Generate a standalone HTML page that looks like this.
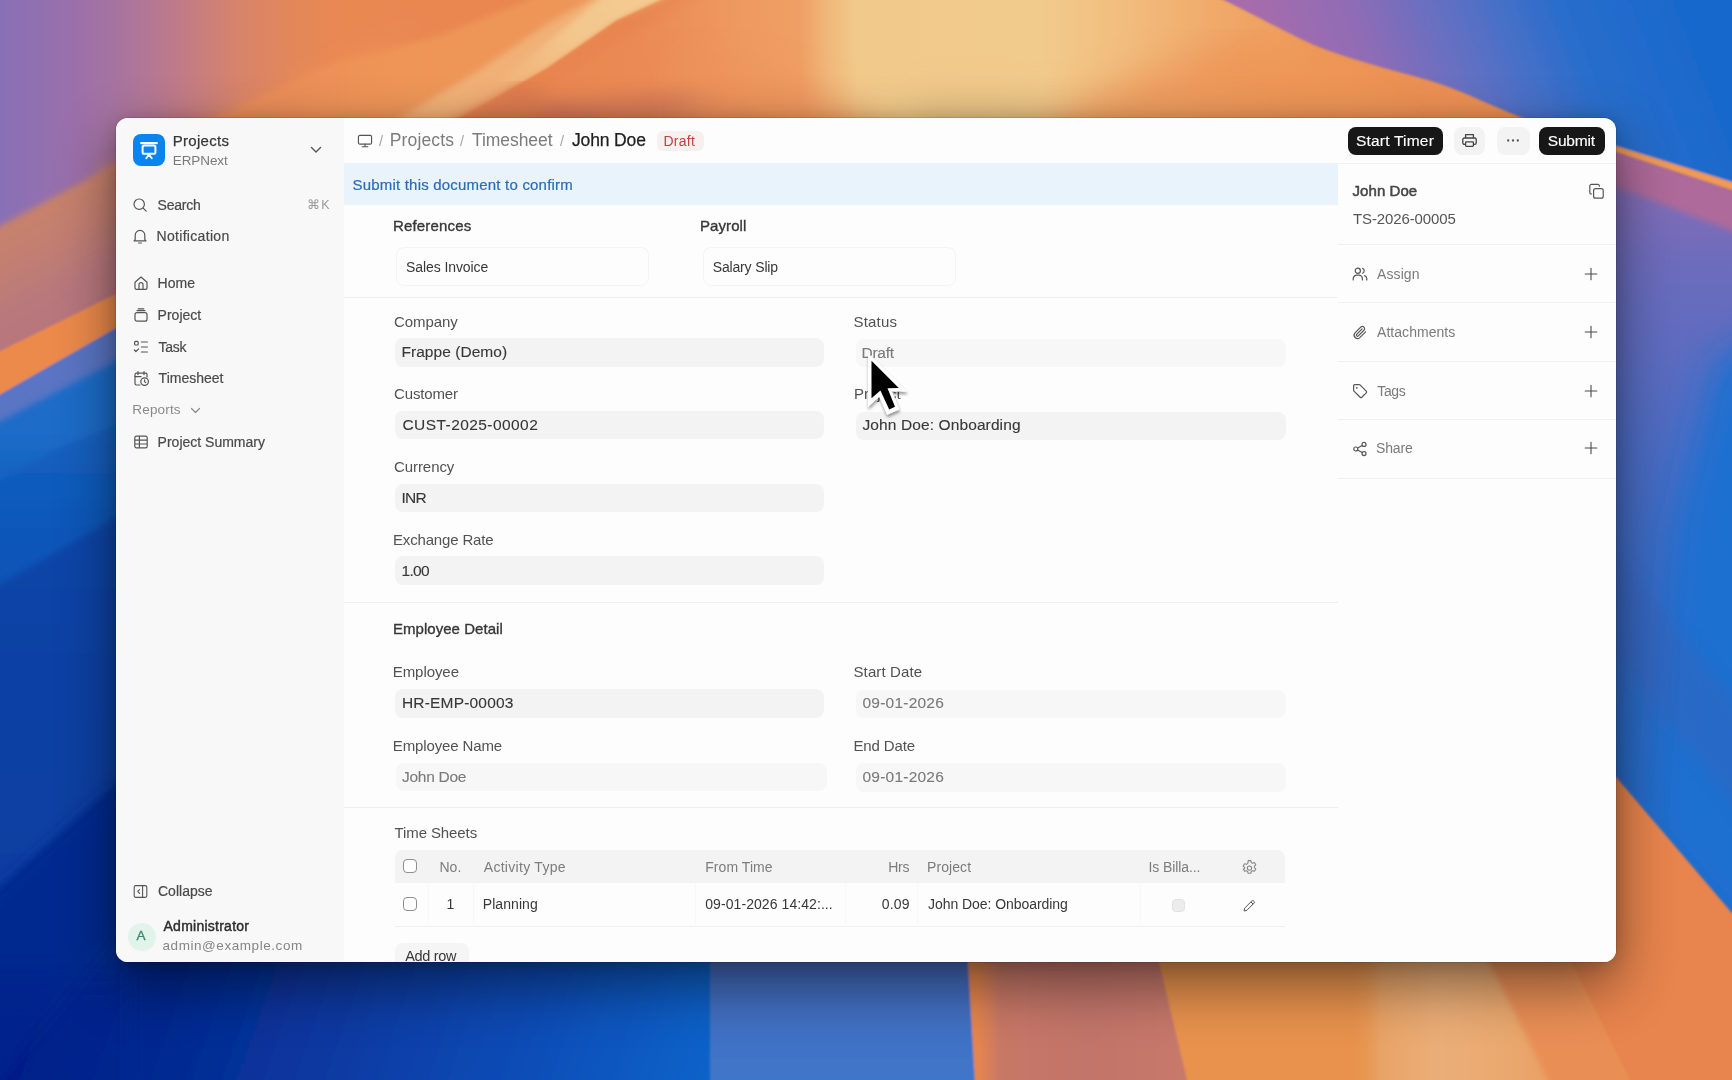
<!DOCTYPE html>
<html>
<head>
<meta charset="utf-8">
<title>John Doe - Timesheet</title>
<style>
*{box-sizing:border-box;margin:0;padding:0}
html,body{width:1732px;height:1080px;overflow:hidden;background:#0a3fa4}
body{font-family:"Liberation Sans",sans-serif;position:relative;color:#383838}
#bg{position:absolute;left:0;top:0;width:1732px;height:1080px}
#shadow{position:absolute;left:116px;top:118px;width:1500px;height:844px;border-radius:12px;box-shadow:0 22px 56px 2px rgba(0,0,0,.46),0 2px 20px rgba(0,0,0,.16),0 0 0 1px rgba(0,0,0,.10)}
#win{will-change:transform;position:absolute;left:116px;top:118px;width:1500px;height:844px;border-radius:12px;background:#fdfdfd;overflow:hidden}
.abs{position:absolute;white-space:nowrap}
/* SIDEBAR */
.m{-webkit-text-stroke:.25px currentColor}
.t14{font-size:15px;line-height:18px}
.sb{font-size:14px;line-height:18px;color:#4a4a4a;-webkit-text-stroke:.2px currentColor}
#side{position:absolute;left:0;top:0;width:228px;height:844px;background:#f8f8f8}
/* MAIN */
.bc{font-size:17.5px;line-height:22px}
.sec{font-size:15px;line-height:18px;color:#383838;-webkit-text-stroke:.35px currentColor}
.lb{font-size:15px;line-height:18px;color:#525252}
.val{font-size:15.5px;line-height:18px;color:#383838;-webkit-text-stroke:.12px currentColor}
.inp{background:#f3f3f3;border-radius:8px}
.inp.ro{background:#f7f7f7}
.box{border:1px solid #f4f4f4;border-radius:8px;background:#fdfdfd}
.th{font-size:14px;line-height:16px;color:#7c7c7c}
.td{font-size:14px;line-height:18px;color:#383838}
.cb{width:14px;height:14px;border:1.2px solid #8f8f8f;border-radius:4px;background:#fff}
.vs{top:765px;width:1px;height:44px;background:#f8f8f8}
.hl{left:0;width:278px;height:1px;background:#f0f0f0}
.rs{font-size:14px;line-height:18px;color:#7a7a7a}
.pl{left:245.500px}
#main{position:absolute;left:228px;top:0;width:994px;height:844px;background:#fdfdfd}
#rside{position:absolute;left:1222px;top:46px;width:278px;height:798px;background:#fdfdfd}
</style>
</head>
<body>
<svg id="bg" width="1732" height="1080" viewBox="0 0 1732 1080">
<defs>
<linearGradient id="gTop" x1="0" y1="0" x2="1732" y2="0" gradientUnits="userSpaceOnUse">
<stop offset="0" stop-color="#8870b6"/><stop offset="0.023" stop-color="#9270b0"/><stop offset="0.046" stop-color="#9c70a9"/><stop offset="0.069" stop-color="#a8749e"/><stop offset="0.092" stop-color="#b87890"/><stop offset="0.115" stop-color="#c87e7e"/><stop offset="0.139" stop-color="#d8846a"/><stop offset="0.173" stop-color="#e48858"/><stop offset="0.2" stop-color="#ea8852"/><stop offset="0.30" stop-color="#ea8650"/><stop offset="0.37" stop-color="#eb8a54"/><stop offset="0.43" stop-color="#ee9a60"/><stop offset="0.462" stop-color="#ef9f65"/><stop offset="0.478" stop-color="#f0b87a"/><stop offset="0.495" stop-color="#f1ca8b"/><stop offset="0.60" stop-color="#f1cb8c"/><stop offset="0.65" stop-color="#f1bd7e"/><stop offset="0.70" stop-color="#f0aa6a"/><stop offset="0.76" stop-color="#ee9858"/><stop offset="0.82" stop-color="#ec9054"/><stop offset="1" stop-color="#ea8a50"/>
</linearGradient>
<linearGradient id="gTopV" x1="0" y1="0" x2="0" y2="130" gradientUnits="userSpaceOnUse">
<stop offset="0" stop-color="#e8804c" stop-opacity="0"/><stop offset="0.55" stop-color="#e8804c" stop-opacity="0.05"/><stop offset="1" stop-color="#d87048" stop-opacity="0.55"/>
</linearGradient>
<linearGradient id="gSky" x1="1250" y1="0" x2="1640" y2="-150" gradientUnits="userSpaceOnUse">
<stop offset="0" stop-color="#a66cab"/><stop offset="0.22" stop-color="#8f6cb6"/><stop offset="0.45" stop-color="#5d70c4"/><stop offset="0.68" stop-color="#2a6ecb"/><stop offset="1" stop-color="#1668cc"/>
</linearGradient>
<linearGradient id="gLeft" x1="0" y1="0" x2="0" y2="1080" gradientUnits="userSpaceOnUse">
<stop offset="0" stop-color="#1e6eca"/><stop offset="0.40" stop-color="#1c6cc8"/><stop offset="0.50" stop-color="#0e56b8"/><stop offset="0.62" stop-color="#0840a2"/><stop offset="0.78" stop-color="#063296"/><stop offset="0.90" stop-color="#05248a"/><stop offset="1" stop-color="#041e86"/>
</linearGradient>
<linearGradient id="gBotL" x1="60" y1="900" x2="720" y2="1130" gradientUnits="userSpaceOnUse">
<stop offset="0" stop-color="#041e88"/><stop offset="0.2" stop-color="#05288f"/><stop offset="0.45" stop-color="#083aa2"/><stop offset="0.7" stop-color="#0a4cb6"/><stop offset="0.88" stop-color="#0a5cc4"/><stop offset="1" stop-color="#0b66cc"/>
</linearGradient>
<linearGradient id="gRight" x1="0" y1="170" x2="0" y2="900" gradientUnits="userSpaceOnUse">
<stop offset="0" stop-color="#8a6cb4"/><stop offset="0.12" stop-color="#6e6cbc"/><stop offset="0.40" stop-color="#4a6cc4"/><stop offset="0.70" stop-color="#2f69c4"/><stop offset="1" stop-color="#2568c6"/>
</linearGradient>
<linearGradient id="gRightH" x1="1616" y1="0" x2="1732" y2="0" gradientUnits="userSpaceOnUse">
<stop offset="0" stop-color="#1a70d0" stop-opacity="0"/><stop offset="0.45" stop-color="#1a70d0" stop-opacity="0.35"/><stop offset="1" stop-color="#1a70d0" stop-opacity="0.95"/>
</linearGradient>
<linearGradient id="gPeach" x1="1352" y1="0" x2="1550" y2="0" gradientUnits="userSpaceOnUse">
<stop offset="0" stop-color="#e8964f" stop-opacity="0"/><stop offset="0.15" stop-color="#e9a468"/><stop offset="0.45" stop-color="#ebae78"/><stop offset="0.8" stop-color="#eaa86e"/><stop offset="1" stop-color="#e9a064"/>
</linearGradient>
<linearGradient id="gRose" x1="968" y1="0" x2="1200" y2="0" gradientUnits="userSpaceOnUse">
<stop offset="0" stop-color="#e8884e"/><stop offset="0.05" stop-color="#e4844f"/><stop offset="0.14" stop-color="#c87866"/><stop offset="0.5" stop-color="#c2746a"/><stop offset="1" stop-color="#c87a6a"/>
</linearGradient>
<linearGradient id="gPeri" x1="0" y1="962" x2="0" y2="1080" gradientUnits="userSpaceOnUse">
<stop offset="0" stop-color="#446abc"/><stop offset="1" stop-color="#4076ca"/>
</linearGradient>
<linearGradient id="gB1" x1="0" y1="0" x2="420" y2="0" gradientUnits="userSpaceOnUse">
<stop offset="0" stop-color="#cc8270"/><stop offset="0.3" stop-color="#d2846a"/><stop offset="0.6" stop-color="#e88a5a"/><stop offset="0.85" stop-color="#ee9056" stop-opacity=".6"/><stop offset="1" stop-color="#ee9056" stop-opacity="0"/>
</linearGradient>
<filter id="b20" x="-30%" y="-10%" width="160%" height="120%"><feGaussianBlur stdDeviation="18"/></filter>
<linearGradient id="gEdge" x1="546" y1="69" x2="566" y2="97" gradientUnits="userSpaceOnUse"><stop offset="0" stop-color="#e8844e"/><stop offset="1" stop-color="#e8844e" stop-opacity="0"/></linearGradient>
<linearGradient id="gStreak" x1="661" y1="0" x2="470" y2="112" gradientUnits="userSpaceOnUse"><stop offset="0" stop-color="#f4cc92"/><stop offset="0.45" stop-color="#f3c68c"/><stop offset="1" stop-color="#f1b076" stop-opacity="0.2"/></linearGradient>
<linearGradient id="gB1v" x1="58" y1="195" x2="114" y2="300" gradientUnits="userSpaceOnUse"><stop offset="0" stop-color="#c8826a"/><stop offset="0.35" stop-color="#c27e72"/><stop offset="0.7" stop-color="#b8787c"/><stop offset="1" stop-color="#b6767e"/></linearGradient>
<filter id="b3" x="-5%" y="-5%" width="110%" height="110%"><feGaussianBlur stdDeviation="3"/></filter>
<filter id="b8" x="-5%" y="-5%" width="110%" height="110%"><feGaussianBlur stdDeviation="8"/></filter>
<filter id="b1" x="-5%" y="-5%" width="110%" height="110%"><feGaussianBlur stdDeviation="1.2"/></filter>
</defs>
<!-- base -->
<rect x="-20" y="-20" width="1772" height="1120" fill="url(#gLeft)"/>
<!-- top dune area -->
<rect x="-20" y="-20" width="1772" height="420" fill="url(#gTop)"/>
<!-- light ridge fan top-left -->
<g filter="url(#b3)">
<path d="M205,130 L217,120 L339,62 L442,35 L529,0 L545,-12 L680,-12 L661,0 L616,21 L546,69 L460,118 L440,130 Z" fill="#ee9658"/>
<path d="M380,130 L480,70 L546,25 L590,0 L610,-12 L680,-12 L661,0 L616,21 L546,69 L460,118 L440,130 Z" fill="#f1b076"/>
</g>
<g filter="url(#b3)">
<path d="M462,117 L546,69 L616,21 L661,0 L680,-12 L612,-12 L598,0 L572,22 L530,56 L490,88 Z" fill="url(#gStreak)"/>
</g>
<g filter="url(#b1)"><path d="M460,118 L546,69 L616,21 L661,0 L680,-12 L700,-12 L700,10 L640,30 L560,80 L480,130 L450,130 Z" fill="url(#gEdge)"/></g>
<g filter="url(#b8)">
<path d="M440,140 L460,118 L520,84 L600,118 L760,140 Z" fill="#d87850" opacity=".8"/>
<path d="M500,140 L560,100 L700,90 L820,140 Z" fill="#c87058" opacity=".55"/>
</g>
<g filter="url(#b20)">
<path d="M690,150 L690,60 Q800,70 905,150 Z" fill="#ec9258" opacity=".75"/>
<path d="M1010,150 Q1090,80 1250,40 L1420,150 Z" fill="#ec9256" opacity=".7"/>
<path d="M900,150 L920,100 L1040,100 L1060,150 Z" fill="#d8b078" opacity=".5"/>
</g>
<!-- left strip bands -->
<g filter="url(#b8)">
<path d="M100,172 L116,164 L240,106 L330,62 L420,20 L420,150 L100,190 Z" fill="url(#gB1)"/>
</g>
<g filter="url(#b3)">
<path d="M-30,242 L116,164 L140,151 L140,430 L-30,430 Z" fill="url(#gB1v)"/>
</g>
<g filter="url(#b1)">
<path d="M-20,361 L116,294 L140,282 L140,420 L-20,420 Z" fill="#ec8a4c"/>
<path d="M-20,406 L116,328 L140,314 L140,620 L-20,620 Z" fill="#5a74c4"/>
</g>
<g filter="url(#b3)">
<path d="M-20,432 L116,361 L140,348 L140,1100 L-20,1100 Z" fill="url(#gLeft)"/>
<path d="M-20,490 L55,450 L116,425 L140,412 L140,1100 L-20,1100 Z" fill="#0f58ba" opacity=".55"/>
<path d="M-20,596 L116,517 L140,503 L140,1100 L-20,1100 Z" fill="#083a9c" opacity=".6"/>
<path d="M-20,905 L116,784 L140,763 L140,1100 L-20,1100 Z" fill="#062a8e" opacity=".75"/>
</g>
<!-- bottom strip -->
<g filter="url(#b20)"><rect x="-60" y="975" width="780" height="200" fill="url(#gBotL)"/></g><g filter="url(#b8)"><rect x="130" y="940" width="600" height="180" fill="url(#gBotL)"/></g>
<g filter="url(#b8)"><path d="M-20,905 L116,784 L116,940 L-20,1100 Z" fill="#062a8e" opacity=".6"/></g>
<g filter="url(#b1)">
<rect x="710" y="900" width="270" height="200" fill="url(#gPeri)"/>
<path d="M964,900 L968,962 L976,1100 L1200,1100 L1200,900 Z" fill="url(#gRose)"/>
<path d="M1150,900 L1159,962 L1187,1080 L1192,1100 L1760,1100 L1760,900 Z" fill="#e8924e"/>
</g>
<g filter="url(#b3)">
<path d="M1352,930 L1485,930 L1489,962 L1548,1080 L1558,1100 L1352,1100 Z" fill="url(#gPeach)"/>
<path d="M1485,930 L1565,930 L1571,962 L1630,1080 L1640,1100 L1558,1100 L1548,1080 L1489,962 Z" fill="#e98e54"/>
</g>
<!-- right strip -->
<rect x="1560" y="140" width="200" height="800" fill="url(#gRight)"/>
<g filter="url(#b20)"><path d="M1716,360 L1790,325 L1790,990 L1650,830 L1674,530 Z" fill="#1a70d0"/></g>
<g filter="url(#b8)"><path d="M1590,520 L1770,745 L1770,850 L1590,625 Z" fill="#3a5eb6" opacity=".38"/></g>
<g filter="url(#b1)">
<path d="M1560,722 L1616,777 L1732,913 L1760,946 L1760,1100 L1640,1100 L1630,1080 L1571,962 L1560,930 Z" fill="#e8844d"/>
</g>
<g filter="url(#b3)"><path d="M1560,133 L1616,150 L1732,187 L1760,196 L1760,244 L1732,231 L1616,186 L1560,166 Z" fill="#ae6a9a"/></g>
<!-- sky top-right -->
<g filter="url(#b1)">
<path d="M1213,-5 C1250,12 1290,35 1319,47 S1400,72 1428,80 S1490,105 1520,117 L1616,147 L1732,184 L1760,193 L1760,-20 L1213,-20 Z" fill="url(#gSky)"/>
<path d="M1560,130 L1616,146 L1732,182 L1760,191 L1760,200 L1732,190 L1616,152 L1560,135 Z" fill="#f09a52"/>
</g>

</svg>
<div id="shadow"></div>
<div id="win">
<div id="side">
<!-- logo -->
<div class="abs" style="left:17px;top:16px;width:32px;height:32px;border-radius:8px;background:#0a85f0"></div>
<svg class="abs" style="left:17px;top:16px" width="32" height="32" viewBox="0 0 32 32" fill="none">
<path d="M8.2 9.2h15.6" stroke="#fff" stroke-width="2.2" stroke-linecap="round"/>
<rect x="9.6" y="11.6" width="12.8" height="8.2" rx="1.6" stroke="#fff" stroke-width="2"/>
<path d="M13.2 24.2l2.8-3.6 2.8 3.6" stroke="#fff" stroke-width="1.8" stroke-linecap="round" stroke-linejoin="round"/>
<path d="M16 19.8v2" stroke="#fff" stroke-width="1.8"/>
</svg>
<div class="abs t14 m" id="s_projects" style="left:56.75px;top:14.06px;color:#383838;letter-spacing:0.286px">Projects</div>
<div class="abs" id="s_erp" style="left:56.75px;top:34.83px;font-size:13.5px;line-height:16px;color:#7a7a7a;letter-spacing:-0.081px">ERPNext</div>
<svg class="abs" style="left:194px;top:28px" width="12" height="8" viewBox="0 0 12 8" fill="none"><path d="M1.5 1.5L6 6l4.5-4.5" stroke="#555" stroke-width="1.4" stroke-linecap="round" stroke-linejoin="round"/></svg>
<!-- search -->
<svg class="abs" style="left:16px;top:79px" width="16" height="16" viewBox="0 0 16 16" fill="none"><circle cx="7.2" cy="7.2" r="5.2" stroke="#555" stroke-width="1.2"/><path d="M11.2 11.2l3 3" stroke="#555" stroke-width="1.2" stroke-linecap="round"/></svg>
<div class="abs sb" id="s_search" style="left:41.50px;top:77.66px;letter-spacing:-0.200px">Search</div>
<div class="abs" id="s_k" style="left:191.25px;top:79.18px;font-size:12.5px;line-height:16px;color:#9a9a9a;letter-spacing:1.000px">&#8984;K</div>
<svg class="abs" style="left:16px;top:110px" width="16" height="17" viewBox="0 0 16 17" fill="none"><path d="M3.2 11.6V7.2a4.8 4.8 0 019.6 0v4.4l1.2 1.2H2l1.2-1.2z" stroke="#555" stroke-width="1.2" stroke-linejoin="round"/><path d="M6.6 15h2.8" stroke="#555" stroke-width="1.2" stroke-linecap="round"/></svg>
<div class="abs sb" id="s_notif" style="left:40.50px;top:109.41px;letter-spacing:0.316px">Notification</div>
<!-- nav -->
<svg class="abs" style="left:17px;top:157px" width="16" height="16" viewBox="0 0 16 16" fill="none"><path d="M2 7.2L8 2l6 5.2V13a1.4 1.4 0 01-1.4 1.4H3.4A1.4 1.4 0 012 13V7.2z" stroke="#555" stroke-width="1.2" stroke-linejoin="round"/><path d="M6 14.2V9.6a2 2 0 014 0v4.6" stroke="#555" stroke-width="1.2"/></svg>
<div class="abs sb" id="s_home" style="left:41.60px;top:156.36px;letter-spacing:-0.002px">Home</div>
<svg class="abs" style="left:17px;top:189px" width="16" height="16" viewBox="0 0 16 16" fill="none"><rect x="2" y="5.6" width="12" height="8.6" rx="2" stroke="#555" stroke-width="1.2"/><path d="M4 3.6h8M5.2 1.8h5.6" stroke="#555" stroke-width="1.2" stroke-linecap="round"/></svg>
<div class="abs sb" id="s_project" style="left:41.60px;top:188.05px;letter-spacing:0.002px">Project</div>
<svg class="abs" style="left:17px;top:221px" width="16" height="16" viewBox="0 0 16 16" fill="none"><rect x="1.6" y="2.4" width="3.6" height="3.6" rx="1" stroke="#555" stroke-width="1.2"/><path d="M1.4 11l1.5 1.5L5.6 9.8" stroke="#555" stroke-width="1.2" stroke-linecap="round" stroke-linejoin="round"/><path d="M8.4 3h6M8.4 8h6M8.4 13h6" stroke="#555" stroke-width="1.2" stroke-linecap="round"/></svg>
<div class="abs sb" id="s_task" style="left:42.60px;top:219.75px;letter-spacing:-0.333px">Task</div>
<svg class="abs" style="left:17px;top:252px" width="17" height="17" viewBox="0 0 17 17" fill="none"><path d="M7 15H3.4A1.4 1.4 0 012 13.6V4.6a1.4 1.4 0 011.4-1.4h9.2A1.4 1.4 0 0114 4.600V7" stroke="#555" stroke-width="1.2" stroke-linecap="round"/><path d="M5 1.6v3M11 1.6v3M2 6.6h6" stroke="#555" stroke-width="1.2" stroke-linecap="round"/><circle cx="11.6" cy="11.6" r="3.8" stroke="#555" stroke-width="1.2"/><path d="M11.6 9.8v2l1.2.8" stroke="#555" stroke-width="1.1" stroke-linecap="round"/></svg>
<div class="abs sb" id="s_ts" style="left:42.60px;top:251.46px;letter-spacing:0.000px">Timesheet</div>
<div class="abs" id="s_reports" style="left:16.30px;top:284.33px;font-size:13.5px;line-height:16px;color:#8a8a8a;letter-spacing:0.166px">Reports</div>
<svg class="abs" style="left:74px;top:289px" width="11" height="8" viewBox="0 0 11 8" fill="none"><path d="M1.5 1.5l4 4 4-4" stroke="#8a8a8a" stroke-width="1.2" stroke-linecap="round" stroke-linejoin="round"/></svg>
<svg class="abs" style="left:17px;top:316px" width="16" height="16" viewBox="0 0 16 16" fill="none"><rect x="1.8" y="2.2" width="12.4" height="11.6" rx="1.6" stroke="#555" stroke-width="1.2"/><path d="M1.8 6.2h12.4M1.8 10h12.4M6.4 2.2v11.6" stroke="#555" stroke-width="1.2"/></svg>
<div class="abs sb" id="s_ps" style="left:41.60px;top:314.86px;letter-spacing:0.000px">Project Summary</div>
<!-- bottom -->
<svg class="abs" style="left:17px;top:766px" width="15" height="15" viewBox="0 0 15 15" fill="none"><rect x="1.2" y="1.6" width="12.6" height="11.8" rx="1.6" stroke="#555" stroke-width="1.1"/><path d="M9.6 1.6v11.8" stroke="#555" stroke-width="1.1"/><path d="M6.6 5.6L4.8 7.500l1.8 1.9" stroke="#555" stroke-width="1.1" stroke-linecap="round" stroke-linejoin="round"/></svg>
<div class="abs sb" id="s_collapse" style="left:42.00px;top:763.86px;color:#4a4a4a;letter-spacing:0.002px">Collapse</div>
<div class="abs" style="left:12px;top:805px;width:28px;height:28px;border-radius:14px;background:#e2f3ea"></div>
<div class="abs" id="s_a" style="left:20.50px;top:810.03px;font-size:13.5px;line-height:16px;color:#38876a;-webkit-text-stroke:.3px currentColor;letter-spacing:0.000px">A</div>
<div class="abs m" id="s_admin" style="left:47.50px;top:799.86px;font-size:14px;line-height:16px;color:#2e2e2e;letter-spacing:0.251px;-webkit-text-stroke:.45px currentColor">Administrator</div>
<div class="abs" id="s_email" style="left:46.50px;top:819.72px;font-size:13.5px;line-height:16px;color:#858585;letter-spacing:0.560px">admin@example.com</div>

</div>
<div id="main">
<!-- banner -->
<div class="abs" style="left:0;top:45.500px;width:994px;height:41px;background:#e9f3fb"></div>
<div class="abs" id="m_banner" style="left:8.50px;top:57.81px;font-size:15px;line-height:18px;color:#2b6cb3;-webkit-text-stroke:.2px currentColor;letter-spacing:0.200px">Submit this document to confirm</div>
<!-- references -->
<div class="abs sec" id="m_ref" style="left:49.00px;top:99.06px;letter-spacing:0.164px">References</div>
<div class="abs sec" id="m_pay" style="left:356.00px;top:99.06px;letter-spacing:0.083px">Payroll</div>
<div class="abs box" style="left:52px;top:129px;width:253px;height:39px"></div>
<div class="abs" id="m_si" style="left:62.00px;top:141.16px;font-size:14px;line-height:16px;color:#383838;letter-spacing:-0.083px">Sales Invoice</div>
<div class="abs box" style="left:359px;top:129px;width:253px;height:39px"></div>
<div class="abs" id="m_ss" style="left:368.70px;top:141.16px;font-size:14px;line-height:16px;color:#383838;letter-spacing:-0.150px">Salary Slip</div>
<div class="abs" style="left:0;top:179px;width:994px;height:1px;background:#efefef"></div>
<!-- col 1 -->
<div class="abs lb" id="m_company" style="left:50.00px;top:194.56px;letter-spacing:-0.085px">Company</div>
<div class="abs inp" style="left:50.500px;top:220px;width:429.500px;height:28.500px"></div>
<div class="abs val" id="m_frappe" style="left:57.50px;top:225.13px;letter-spacing:0.040px">Frappe (Demo)</div>
<div class="abs lb" id="m_customer" style="left:50.00px;top:267.06px;letter-spacing:-0.141px">Customer</div>
<div class="abs inp" style="left:50.500px;top:292.500px;width:429.500px;height:28.500px"></div>
<div class="abs val" id="m_cust" style="left:58.50px;top:298.13px;letter-spacing:0.429px">CUST-2025-00002</div>
<div class="abs lb" id="m_currency" style="left:50.00px;top:339.81px;letter-spacing:-0.074px">Currency</div>
<div class="abs inp" style="left:50.500px;top:365.500px;width:429.500px;height:28.500px"></div>
<div class="abs val" id="m_inr" style="left:57.50px;top:370.88px;letter-spacing:-0.750px">INR</div>
<div class="abs lb" id="m_exch" style="left:49.00px;top:412.56px;letter-spacing:-0.166px">Exchange Rate</div>
<div class="abs inp" style="left:50.500px;top:438px;width:429.500px;height:28.500px"></div>
<div class="abs val" id="m_one" style="left:57.50px;top:443.63px;letter-spacing:-0.667px">1.00</div>
<!-- col 2 -->
<div class="abs lb" id="m_status" style="left:509.50px;top:194.56px;letter-spacing:0.200px">Status</div>
<div class="abs inp ro" style="left:512px;top:220.500px;width:430px;height:28.500px"></div>
<div class="abs val" id="m_draft" style="left:517.50px;top:225.63px;color:#7a7a7a;letter-spacing:-0.250px">Draft</div>
<div class="abs lb" id="m_project" style="left:510px;top:267.31px">Project</div>
<div class="abs inp" style="left:512px;top:293.500px;width:430px;height:28.500px"></div>
<div class="abs val" id="m_jdo" style="left:518.50px;top:298.33px;letter-spacing:0.107px">John Doe: Onboarding</div>
<div class="abs" style="left:0;top:483.500px;width:994px;height:1px;background:#efefef"></div>
<!-- employee -->
<div class="abs sec" id="m_empd" style="left:49.00px;top:501.56px;letter-spacing:0.035px">Employee Detail</div>
<div class="abs lb" id="m_emp" style="left:48.75px;top:545.31px;letter-spacing:-0.068px">Employee</div>
<div class="abs inp" style="left:50.500px;top:571px;width:429.500px;height:28.500px"></div>
<div class="abs val" id="m_hr" style="left:58.00px;top:576.13px;letter-spacing:0.181px">HR-EMP-00003</div>
<div class="abs lb" id="m_empn" style="left:48.75px;top:618.81px;letter-spacing:-0.124px">Employee Name</div>
<div class="abs inp ro" style="left:52px;top:644.500px;width:431px;height:28.500px"></div>
<div class="abs val" id="m_jd" style="left:58.00px;top:649.63px;color:#7a7a7a;letter-spacing:-0.288px">John Doe</div>
<div class="abs lb" id="m_sd" style="left:509.50px;top:545.31px;letter-spacing:0.111px">Start Date</div>
<div class="abs inp ro" style="left:512px;top:571.500px;width:430px;height:28.500px"></div>
<div class="abs val" id="m_sdv" style="left:518.50px;top:576.38px;color:#7a7a7a;letter-spacing:0.223px">09-01-2026</div>
<div class="abs lb" id="m_ed" style="left:509.50px;top:619.06px;letter-spacing:-0.143px">End Date</div>
<div class="abs inp ro" style="left:512px;top:645px;width:430px;height:28.500px"></div>
<div class="abs val" id="m_edv" style="left:518.50px;top:650.13px;color:#7a7a7a;letter-spacing:0.223px">09-01-2026</div>
<div class="abs" style="left:0;top:689px;width:994px;height:1px;background:#efefef"></div>
<!-- time sheets -->
<div class="abs lb" id="m_tsh" style="left:50.50px;top:705.81px;letter-spacing:-0.100px">Time Sheets</div>
<div class="abs" style="left:50.500px;top:732px;width:890px;height:33px;background:#f3f3f3;border-radius:8px 8px 0 0"></div>
<div class="abs" style="left:50.500px;top:808px;width:890px;height:1px;background:#f0f0f0"></div>
<div class="abs cb" style="left:59px;top:740.500px"></div>
<div class="abs th" id="t_no" style="left:95.50px;top:741.16px;letter-spacing:0.000px">No.</div>
<div class="abs th" id="t_act" style="left:139.75px;top:741.16px;letter-spacing:0.293px">Activity Type</div>
<div class="abs th" id="t_from" style="left:361.25px;top:741.16px;letter-spacing:0.060px">From Time</div>
<div class="abs th" id="t_hrs" style="left:544.25px;top:741.16px;letter-spacing:-0.250px">Hrs</div>
<div class="abs th" id="t_proj" style="left:583.00px;top:741.16px;letter-spacing:0.086px">Project</div>
<div class="abs th" id="t_bill" style="left:804.50px;top:741.16px;letter-spacing:-0.100px">Is Billa...</div>
<svg class="abs" style="left:896.7px;top:741.3px" width="17" height="17" viewBox="0 0 15 15" fill="none"><path d="M6.300 1.400h2.400l.4 1.700 1.100.600 1.650-.550 1.200 2.050-1.250 1.150v1.300l1.250 1.150-1.200 2.050-1.650-.550-1.100.600-.4 1.700H6.300l-.4-1.700-1.100-.600-1.650.550-1.200-2.050L3.200 8.650v-1.300L1.950 6.200l1.200-2.050 1.650.550 1.100-.600.400-1.700z" stroke="#858585" stroke-width=".95" stroke-linejoin="round"/><circle cx="7.500" cy="8" r="1.900" stroke="#858585" stroke-width=".95"/></svg>
<div class="abs cb" style="left:59px;top:779px"></div>
<div class="abs td" id="t_1" style="left:102.50px;top:776.91px;letter-spacing:0.000px">1</div>
<div class="abs td" id="t_plan" style="left:138.75px;top:776.91px;letter-spacing:0.069px">Planning</div>
<div class="abs td" id="t_dt" style="left:361.25px;top:776.91px;letter-spacing:0.071px">09-01-2026 14:42:...</div>
<div class="abs td" id="t_009" style="left:537.75px;top:776.91px;letter-spacing:0.169px">0.09</div>
<div class="abs td" id="t_jdo" style="left:584.00px;top:776.91px;letter-spacing:-0.053px">John Doe: Onboarding</div>
<div class="abs" style="left:827.500px;top:780.500px;width:13px;height:13px;border-radius:4px;background:#ececec;border:1px solid #e2e2e2"></div>
<svg class="abs" style="left:898px;top:781px" width="14" height="14" viewBox="0 0 14 14" fill="none"><path d="M2 12l.700-2.900 7.100-7.100a1.300 1.300 0 011.850 0l.35.350a1.300 1.300 0 010 1.850L4.900 11.300 2 12z" stroke="#555" stroke-width="1" stroke-linejoin="round"/><path d="M8.900 2.900l2.200 2.200" stroke="#555" stroke-width="1"/></svg>
<!-- col separators in row -->
<div class="abs vs" style="left:83.500px"></div><div class="abs vs" style="left:129px"></div><div class="abs vs" style="left:351px"></div><div class="abs vs" style="left:501px"></div><div class="abs vs" style="left:572.500px"></div><div class="abs vs" style="left:795.500px"></div>
<div class="abs" style="left:50.500px;top:824.500px;width:74.5px;height:30px;border-radius:8px;background:#f5f5f5"></div>
<div class="abs" id="m_add" style="left:61.25px;top:828.99px;font-size:14.5px;line-height:18px;color:#383838;letter-spacing:-0.333px">Add row</div>

</div>
<div id="rside">
<div class="abs m" id="r_name" style="left:14.50px;top:18.06px;font-size:15px;line-height:18px;color:#454545;-webkit-text-stroke:.5px currentColor;letter-spacing:0.069px">John Doe</div>
<div class="abs" id="r_id" style="left:15.00px;top:45.56px;font-size:15px;line-height:18px;color:#555;letter-spacing:-0.126px">TS-2026-00005</div>
<svg class="abs" style="left:250px;top:19px" width="17" height="17" viewBox="0 0 17 17" fill="none"><rect x="5.600" y="5.600" width="9.600" height="9.600" rx="2" stroke="#555" stroke-width="1.200"/><path d="M11.400 3.200V3a1.600 1.600 0 00-1.600-1.600H3.400A1.600 1.600 0 001.800 3v6.400A1.600 1.600 0 003.400 11h.2" stroke="#555" stroke-width="1.200" stroke-linecap="round"/></svg>
<div class="abs hl" style="top:79.500px"></div>
<div class="abs hl" style="top:138px"></div>
<div class="abs hl" style="top:196.500px"></div>
<div class="abs hl" style="top:255px"></div>
<div class="abs hl" style="top:313.500px"></div>
<!-- assign -->
<svg class="abs" style="left:14px;top:102px" width="16" height="16" viewBox="0 0 16 16" fill="none"><circle cx="5.800" cy="4.800" r="2.600" stroke="#555" stroke-width="1.200"/><path d="M1.200 14v-1.200a3.600 3.600 0 013.600-3.600h2a3.600 3.600 0 013.600 3.600V14" stroke="#555" stroke-width="1.200" stroke-linecap="round"/><path d="M10.600 2.400a2.600 2.600 0 010 4.800M12.600 9.600a3.400 3.400 0 012.200 3.200V14" stroke="#555" stroke-width="1.200" stroke-linecap="round"/></svg>
<div class="abs rs" id="r_assign" style="left:39.00px;top:100.91px;letter-spacing:0.100px">Assign</div>
<svg class="abs pl" style="top:103px" width="14" height="14" viewBox="0 0 14 14"><path d="M7 1.200v11.600M1.200 7h11.600" stroke="#4a4a4a" stroke-width="1.1" stroke-linecap="round"/></svg>
<!-- attachments -->
<svg class="abs" style="left:14px;top:160px" width="16" height="17" viewBox="0 0 16 17" fill="none"><path d="M13.600 7.800l-5.800 5.800a3.400 3.400 0 01-4.800-4.800l6-6a2.300 2.300 0 013.200 3.200l-5.900 5.900a1.100 1.100 0 01-1.600-1.600l5.400-5.400" stroke="#555" stroke-width="1.200" stroke-linecap="round" stroke-linejoin="round"/></svg>
<div class="abs rs" id="r_att" style="left:39.00px;top:159.16px;letter-spacing:0.050px">Attachments</div>
<svg class="abs pl" style="top:160.8px" width="14" height="14" viewBox="0 0 14 14"><path d="M7 1.200v11.600M1.200 7h11.600" stroke="#4a4a4a" stroke-width="1.1" stroke-linecap="round"/></svg>
<!-- tags -->
<svg class="abs" style="left:14px;top:219px" width="16" height="16" viewBox="0 0 16 16" fill="none"><path d="M1.600 2.800a1.200 1.200 0 011.200-1.200h4.400a1.200 1.200 0 01.850.350l6.200 6.200a1.200 1.200 0 010 1.700l-4.400 4.400a1.200 1.200 0 01-1.700 0l-6.200-6.200a1.200 1.200 0 01-.350-.850V2.800z" stroke="#555" stroke-width="1.200" stroke-linejoin="round"/><circle cx="4.800" cy="4.800" r=".9" fill="#555"/></svg>
<div class="abs rs" id="r_tags" style="left:39.25px;top:217.91px;letter-spacing:-0.333px">Tags</div>
<svg class="abs pl" style="top:219.5px" width="14" height="14" viewBox="0 0 14 14"><path d="M7 1.200v11.600M1.200 7h11.600" stroke="#4a4a4a" stroke-width="1.1" stroke-linecap="round"/></svg>
<!-- share -->
<svg class="abs" style="left:14px;top:277px" width="16" height="16" viewBox="0 0 16 16" fill="none"><circle cx="12" cy="3.400" r="2" stroke="#555" stroke-width="1.200"/><circle cx="3.800" cy="8" r="2" stroke="#555" stroke-width="1.200"/><circle cx="12" cy="12.600" r="2" stroke="#555" stroke-width="1.200"/><path d="M5.600 7l4.600-2.600M5.600 9l4.600 2.600" stroke="#555" stroke-width="1.200"/></svg>
<div class="abs rs" id="r_share" style="left:38.00px;top:275.41px;letter-spacing:-0.130px">Share</div>
<svg class="abs pl" style="top:277px" width="14" height="14" viewBox="0 0 14 14"><path d="M7 1.200v11.600M1.200 7h11.600" stroke="#4a4a4a" stroke-width="1.1" stroke-linecap="round"/></svg>

</div>
<div class="abs" style="left:228px;top:45px;width:1272px;height:1px;background:#f0f0f0"></div>
<svg class="abs" style="left:240.6px;top:15.6px" width="16" height="14.2" viewBox="0 0 18 16" fill="none"><rect x="1.600" y="1.600" width="14.8" height="9.8" rx="1.6" stroke="#555" stroke-width="1.3"/><path d="M9 11.400v2.600M5.800 14.400h6.400" stroke="#555" stroke-width="1.3" stroke-linecap="round"/></svg>
<div class="abs bc" id="h_s1" style="left:263px;top:12.24px;color:#a6a6a6;font-size:14.5px">/</div>
<div class="abs bc" id="h_projects" style="left:273.75px;top:11.19px;color:#7c7c7c;letter-spacing:0.143px">Projects</div>
<div class="abs bc" id="h_s2" style="left:344px;top:12.24px;color:#a6a6a6;font-size:14.5px">/</div>
<div class="abs bc" id="h_ts" style="left:356.00px;top:11.19px;color:#7c7c7c;letter-spacing:-0.065px">Timesheet</div>
<div class="abs bc" id="h_s3" style="left:444px;top:12.24px;color:#a6a6a6;font-size:14.5px">/</div>
<div class="abs bc m" id="h_name" style="left:456.00px;top:11.19px;color:#1f1f1f;letter-spacing:-0.143px">John Doe</div>
<div class="abs" style="left:541px;top:12.5px;width:47px;height:20px;border-radius:6px;background:#f6f1f0"></div>
<div class="abs" id="h_draft" style="left:547.50px;top:14.91px;font-size:14px;line-height:16px;color:#c1413f;letter-spacing:0.250px">Draft</div>
<!-- buttons -->
<div class="abs" style="left:1231.500px;top:8.500px;width:95.500px;height:28.500px;border-radius:8px;background:#171717"></div>
<div class="abs m" id="h_start" style="-webkit-text-stroke:.15px #fff;left:1240.00px;top:13.88px;font-size:15.5px;line-height:18px;color:#fff;letter-spacing:0.200px">Start Timer</div>
<div class="abs" style="left:1338px;top:8.500px;width:31px;height:28.500px;border-radius:8px;background:#f3f3f3"></div>
<svg class="abs" style="left:1345px;top:14px" width="17" height="17" viewBox="0 0 17 17" fill="none"><path d="M4.600 6V2.600h7.800V6" stroke="#444" stroke-width="1.3" stroke-linejoin="round"/><rect x="1.800" y="6" width="13.400" height="6.400" rx="1.600" stroke="#444" stroke-width="1.3"/><rect x="4.600" y="9.800" width="7.800" height="4.600" rx=".8" fill="#f3f3f3" stroke="#444" stroke-width="1.3"/></svg>
<div class="abs" style="left:1381px;top:8.500px;width:33px;height:28.500px;border-radius:8px;background:#f3f3f3"></div>
<svg class="abs" style="left:1389px;top:20px" width="16" height="5" viewBox="0 0 16 5"><circle cx="3.200" cy="2.500" r="1.150" fill="#555"/><circle cx="8" cy="2.500" r="1.150" fill="#555"/><circle cx="12.800" cy="2.500" r="1.150" fill="#555"/></svg>
<div class="abs" style="left:1423px;top:8.500px;width:65.500px;height:28.500px;border-radius:8px;background:#171717"></div>
<div class="abs m" id="h_submit" style="-webkit-text-stroke:.15px #fff;left:1431.75px;top:13.88px;font-size:15.5px;line-height:18px;color:#fff;letter-spacing:-0.200px">Submit</div>

</div>
<svg class="abs" style="left:850px;top:340px" width="80" height="90" viewBox="850 340 80 90">
<defs><filter id="cs" x="-30%" y="-30%" width="160%" height="160%"><feGaussianBlur stdDeviation="1.8"/></filter></defs>
<polygon points="867.9,352.9 867.9,407.5 879.2,397.1 887.1,415 899.6,409.6 892.1,391.7 907.5,391.7" fill="#000" opacity=".38" filter="url(#cs)" transform="translate(0.5,2.5)"/>
<polygon points="867.9,352.9 867.9,407.5 879.2,397.1 887.1,415 899.6,409.6 892.1,391.7 907.5,391.7" fill="#fff"/>
<polygon points="871.5,360.8 871.5,398.3 880.4,390.4 889.2,409.6 895,406.7 887.5,388.3 898.75,387.9" fill="#000"/>
</svg>
</body>
</html>
